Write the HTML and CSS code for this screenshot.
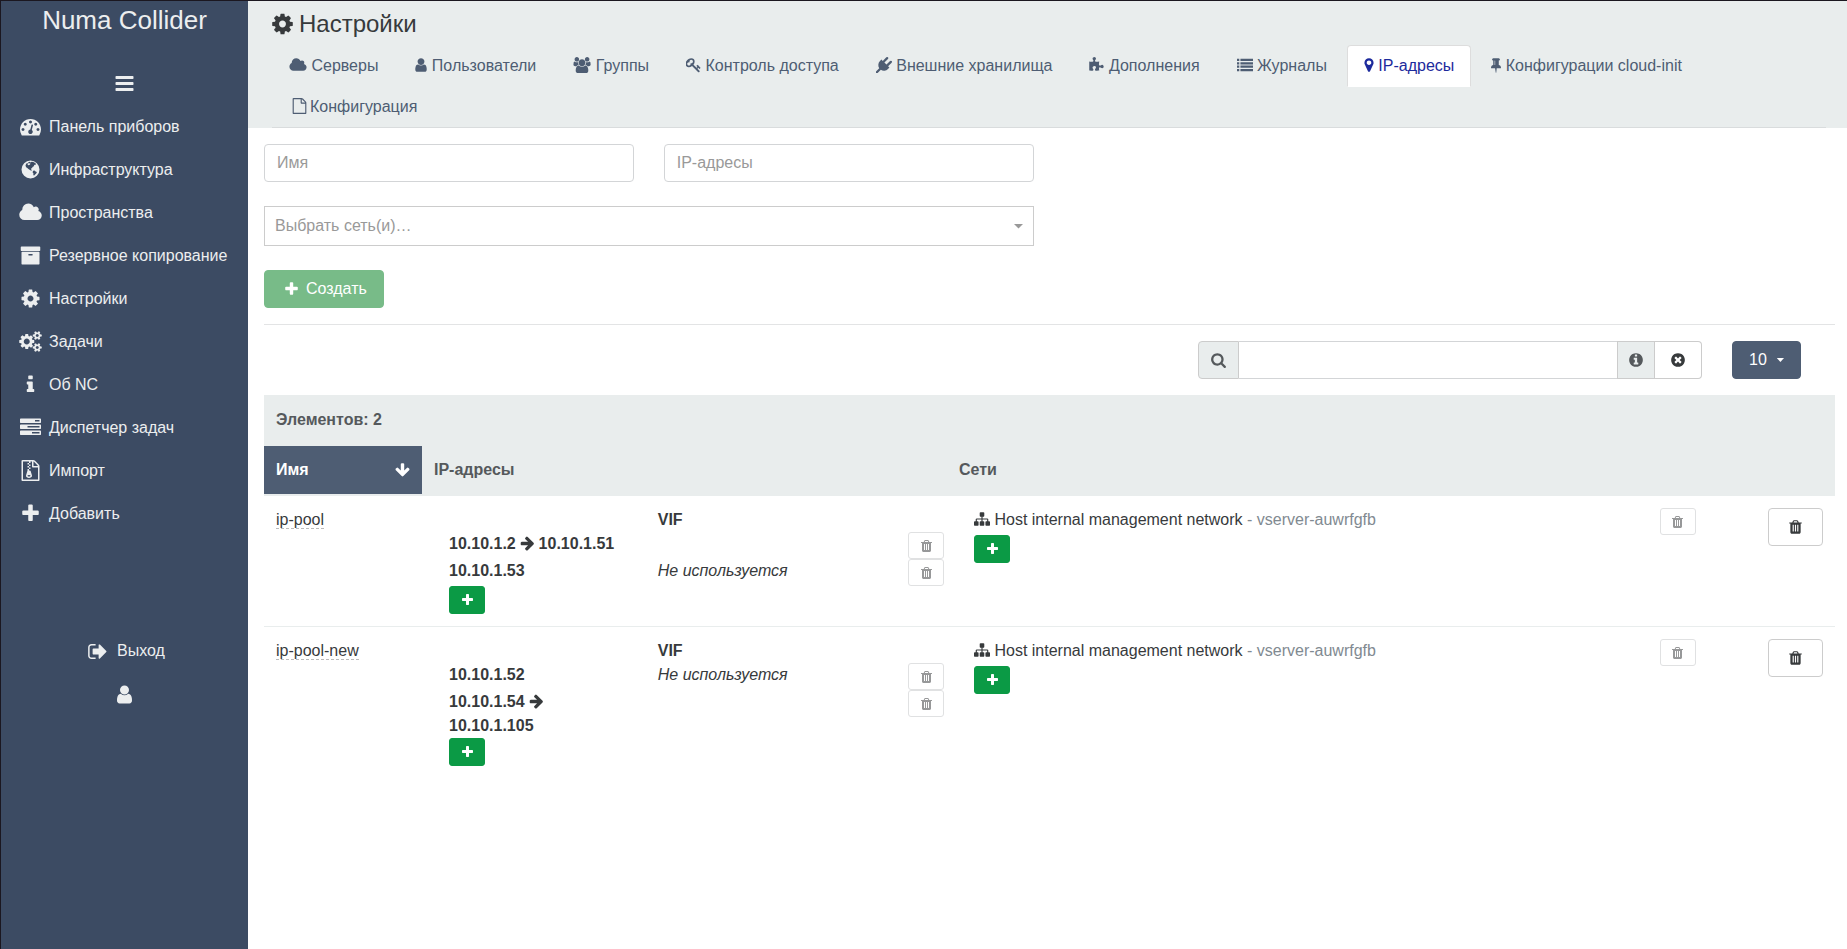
FILE: index.html
```html
<!DOCTYPE html>
<html lang="ru">
<head>
<meta charset="utf-8">
<title>Numa Collider</title>
<link rel="stylesheet" href="styles.css">
</head>
<body>
<svg class="sprite" aria-hidden="true">
<symbol id="bars" viewBox="128 0 1536 1792"><path d="M1664 1344v128q0 26-19 45t-45 19h-1408q-26 0-45-19t-19-45v-128q0-26 19-45t45-19h1408q26 0 45 19t19 45zm0-512v128q0 26-19 45t-45 19h-1408q-26 0-45-19t-19-45v-128q0-26 19-45t45-19h1408q26 0 45 19t19 45zm0-512v128q0 26-19 45t-45 19h-1408q-26 0-45-19t-19-45v-128q0-26 19-45t45-19h1408q26 0 45 19t19 45z"/></symbol>
<symbol id="gauge" viewBox="0 0 1792 1792"><path d="M384 1152q0-53-37.500-90.500t-90.500-37.500-90.500 37.500-37.500 90.500 37.500 90.500 90.500 37.500 90.500-37.500 37.500-90.500zm192-448q0-53-37.500-90.500t-90.500-37.500-90.500 37.500-37.500 90.500 37.500 90.500 90.500 37.500 90.500-37.500 37.500-90.500zm428 481l101-382q6-26-7.500-48.500t-38.500-29.500-48 6.500-30 39.500l-101 382q-60 5-107 43.500t-63 98.500q-20 77 20 146t117 89 146-20 89-117q16-60-6-117t-72-91zm660-33q0-53-37.500-90.500t-90.500-37.500-90.500 37.500-37.500 90.500 37.500 90.500 90.500 37.500 90.500-37.500 37.500-90.500zm-640-640q0-53-37.500-90.500t-90.500-37.500-90.500 37.500-37.500 90.500 37.500 90.500 90.500 37.500 90.500-37.500 37.500-90.500zm448 192q0-53-37.500-90.500t-90.500-37.500-90.500 37.500-37.500 90.500 37.500 90.500 90.500 37.500 90.500-37.500 37.500-90.500zm320 448q0 261-141 483-19 29-54 29h-1402q-35 0-54-29-141-221-141-483 0-182 71-348t191-286 286-191 348-71 348 71 286 191 191 286 71 348z"/></symbol>
<symbol id="globe" viewBox="128 0 1536 1792"><path fill-rule="evenodd" d="M896 128a768 768 0 1 0 0 1536a768 768 0 1 0 0-1536zM700 270L840 230L880 290L1000 230L1130 260L1290 340L1370 430L1290 520L1220 500L1180 620L1070 690L1020 780L930 800L960 900L1010 960L960 1010L850 930L720 860L600 740L520 700L470 560L520 430L600 340L690 400L640 480L720 540L830 500L900 400L820 360L720 380zM1120 1010L1240 990L1330 1060L1440 1100L1400 1220L1290 1330L1190 1420L1130 1330L1150 1230L1070 1120z"/></symbol>
<symbol id="cloud" viewBox="64 0 1920 1792"><path d="M1984 1152q0 159-112.500 271.500t-271.500 112.500h-1088q-185 0-316.500-131.500t-131.500-316.500q0-132 71-241.500t187-163.500q-2-28-2-43 0-212 150-362t362-150q158 0 286.500 88t187.500 230q70-62 166-62 106 0 181 75t75 181q0 75-41 138 129 30 213 134.500t84 239.500z"/></symbol>
<symbol id="archive" viewBox="64 0 1664 1792"><path d="M1088 832q0-26-19-45t-45-19h-256q-26 0-45 19t-19 45 19 45 45 19h256q26 0 45-19t19-45zm576-192v960q0 26-19 45t-45 19h-1408q-26 0-45-19t-19-45v-960q0-26 19-45t45-19h1408q26 0 45 19t19 45zm64-448v256q0 26-19 45t-45 19h-1536q-26 0-45-19t-19-45v-256q0-26 19-45t45-19h1536q26 0 45 19t19 45z"/></symbol>
<symbol id="cog" viewBox="128 0 1536 1792"><path d="M1152 896q0-106-75-181t-181-75-181 75-75 181 75 181 181 75 181-75 75-181zm512-109v222q0 12-8 23t-20 13l-185 28q-19 54-39 91 35 50 107 138 10 12 10 25t-9 23q-27 37-99 108t-94 71q-12 0-26-9l-138-108q-44 23-91 38-16 136-29 186-7 28-36 28h-222q-14 0-24.500-8.500t-11.500-21.500l-28-184q-49-16-90-37l-141 107q-10 9-25 9-14 0-25-11-126-114-165-168-7-10-7-23 0-12 8-23 15-21 51-66.500t54-70.500q-27-50-41-99l-183-27q-13-2-21-12.500t-8-23.500v-222q0-12 8-23t19-13l186-28q14-46 39-92-40-57-107-138-10-12-10-24 0-10 9-23 26-36 98.500-107.500t94.500-71.500q13 0 26 10l138 107q44-23 91-38 16-136 29-186 7-28 36-28h222q14 0 24.500 8.500t11.500 21.500l28 184q49 16 90 37l142-107q9-9 24-9 13 0 25 10 129 119 165 170 7 8 7 22 0 12-8 23-15 21-51 66.500t-54 70.500q26 50 41 98l183 28q13 2 21 12.500t8 23.500z"/></symbol>
<symbol id="cogs" viewBox="0 0 1920 1792"><path d="M896 896q0-106-75-181t-181-75-181 75-75 181 75 181 181 75 181-75 75-181zm768 512q0-52-38-90t-90-38-90 38-38 90q0 53 37.500 90.500t90.500 37.500 90.500-37.500 37.500-90.500zm0-1024q0-52-38-90t-90-38-90 38-38 90q0 53 37.500 90.500t90.500 37.500 90.500-37.500 37.500-90.500zm-384 421v185q0 10-7 19.500t-16 10.500l-155 24q-11 35-32 76 34 48 90 115 7 11 7 20 0 12-7 19-23 30-82.500 89.500t-78.500 59.500q-11 0-21-7l-115-90q-37 19-77 31-11 108-23 155-7 24-30 24h-186q-11 0-20-7.500t-10-17.500l-23-153q-34-10-75-31l-118 89q-7 7-20 7-11 0-21-8-144-133-144-160 0-9 7-19 10-14 41-53t47-61q-23-44-35-82l-152-24q-10-1-17-9.500t-7-19.500v-185q0-10 7-19.500t16-10.500l155-24q11-35 32-76-34-48-90-115-7-11-7-20 0-12 7-20 22-30 82-89t79-59q11 0 21 7l115 90q34-18 77-32 11-108 23-154 7-24 30-24h186q11 0 20 7.500t10 17.500l23 153q34 10 75 31l118-89q8-7 20-7 11 0 21 8 144 133 144 160 0 8-7 19-12 16-42 54t-45 60q23 48 34 82l152 23q10 2 17 10.500t7 19.500zm640 533v140q0 16-149 31-12 27-30 52 51 113 51 138 0 4-4 7-122 71-124 71-8 0-46-47t-52-68q-20 2-30 2t-30-2q-14 21-52 68t-46 47q-2 0-124-71-4-3-4-7 0-25 51-138-18-25-30-52-149-15-149-31v-140q0-16 149-31 13-29 30-52-51-113-51-138 0-4 4-7 4-2 35-20t59-34 30-16q8 0 46 46.500t52 67.500q20-2 30-2t30 2q51-71 92-112l6-2q4 0 124 70 4 3 4 7 0 25-51 138 17 23 30 52 149 15 149 31zm0-1024v140q0 16-149 31-12 27-30 52 51 113 51 138 0 4-4 7-122 71-124 71-8 0-46-47t-52-68q-20 2-30 2t-30-2q-14 21-52 68t-46 47q-2 0-124-71-4-3-4-7 0-25 51-138-18-25-30-52-149-15-149-31v-140q0-16 149-31 13-29 30-52-51-113-51-138 0-4 4-7 4-2 35-20t59-34 30-16q8 0 46 46.500t52 67.500q20-2 30-2t30 2q51-71 92-112l6-2q4 0 124 70 4 3 4 7 0 25-51 138 17 23 30 52 149 15 149 31z"/></symbol>
<symbol id="info" viewBox="576 0 640 1792"><path d="M1216 1344v128q0 26-19 45t-45 19h-512q-26 0-45-19t-19-45v-128q0-26 19-45t45-19h64v-384h-64q-26 0-45-19t-19-45v-128q0-26 19-45t45-19h384q26 0 45 19t19 45v576h64q26 0 45 19t19 45zm-128-1152v192q0 26-19 45t-45 19h-256q-26 0-45-19t-19-45v-192q0-26 19-45t45-19h256q26 0 45 19t19 45z"/></symbol>
<symbol id="tasks" viewBox="0 0 1792 1792"><path d="M1024 1408h640v-128h-640v128zm-384-512h1024v-128h-1024v128zm640-512h384v-128h-384v128zm512 832v256q0 26-19 45t-45 19h-1664q-26 0-45-19t-19-45v-256q0-26 19-45t45-19h1664q26 0 45 19t19 45zm0-512v256q0 26-19 45t-45 19h-1664q-26 0-45-19t-19-45v-256q0-26 19-45t45-19h1664q26 0 45 19t19 45zm0-512v256q0 26-19 45t-45 19h-1664q-26 0-45-19t-19-45v-256q0-26 19-45t45-19h1664q26 0 45 19t19 45z"/></symbol>
<symbol id="file-zip" viewBox="128 0 1536 1792"><path d="M768 384v-128h-128v128h128zm128 128v-128h-128v128h128zm-128 128v-128h-128v128h128zm128 128v-128h-128v128h128zm700-388q28 28 48 76t20 88v1152q0 40-28 68t-68 28h-1344q-40 0-68-28t-28-68v-1600q0-40 28-68t68-28h896q40 0 88 20t76 48zm-444-244v376h376q-10-29-22-41l-313-313q-12-12-41-22zm384 1528v-1024h-416q-40 0-68-28t-28-68v-416h-128v128h-128v-128h-512v1536h1280zm-627-721l107 349q8 27 8 52 0 83-72.500 137.500t-183.500 54.500-183.500-54.500-72.500-137.500q0-25 8-52 21-63 120-396v-128h128v128h79q22 0 39 13t23 34zm-141 465q53 0 90.500-19t37.500-45-37.500-45-90.500-19-90.500 19-37.500 45 37.500 45 90.500 19z"/></symbol>
<symbol id="file" viewBox="128 0 1536 1792"><path d="M1596 380q28 28 48 76t20 88v1152q0 40-28 68t-68 28h-1344q-40 0-68-28t-28-68v-1600q0-40 28-68t68-28h896q40 0 88 20t76 48zm-444-244v376h376q-10-29-22-41l-313-313q-12-12-41-22zm384 1528v-1024h-416q-40 0-68-28t-28-68v-416h-768v1536h1280z"/></symbol>
<symbol id="plus" viewBox="192 0 1408 1792"><path d="M1600 736v192q0 40-28 68t-68 28h-416v416q0 40-28 68t-68 28h-192q-40 0-68-28t-28-68v-416h-416q-40 0-68-28t-28-68v-192q0-40 28-68t68-28h416v-416q0-40 28-68t68-28h192q40 0 68 28t28 68v416h416q40 0 68 28t28 68z"/></symbol>
<symbol id="sign-out" viewBox="64 0 1600 1792"><path d="M704 1440q0 4 1 20t.5 26.500-3 23.500-10 19.500-20.500 6.500h-320q-119 0-203.500-84.500t-84.500-203.500v-704q0-119 84.500-203.500t203.500-84.500h320q13 0 22.500 9.500t9.500 22.500q0 4 1 20t.5 26.500-3 23.500-10 19.500-20.500 6.500h-320q-66 0-113 47t-47 113v704q0 66 47 113t113 47h312l11.500 1 11.500 3 8 5.500 7 9 2 13.500zm928-544q0 26-19 45l-544 544q-19 19-45 19t-45-19-19-45v-288h-448q-26 0-45-19t-19-45v-384q0-26 19-45t45-19h448v-288q0-26 19-45t45-19 45 19l544 544q19 19 19 45z"/></symbol>
<symbol id="user" viewBox="256 0 1280 1792"><path d="M1536 1399q0 109-62.500 187t-150.500 78h-854q-88 0-150.500-78t-62.500-187q0-85 8.500-160.500t31.500-152 58.500-131 94-89 134.500-34.500q131 128 313 128t313-128q76 0 134.500 34.500t94 89 58.500 131 31.500 152 8.500 160.500zm-256-887q0 159-112.500 271.500t-271.500 112.500-271.500-112.500-112.500-271.500 112.500-271.500 271.500-112.500 271.500 112.500 112.500 271.500z"/></symbol>
<symbol id="users" viewBox="64 0 1920 1792"><path d="M657 896q-162 5-265 128h-134q-82 0-138-40.500t-56-118.500q0-353 124-353 6 0 43.500 21t97.500 42.500 119 21.500q67 0 133-23-5 37-5 66 0 159 93 256zm1071 637q0 120-73 189.500t-194 69.500h-874q-121 0-194-69.500t-73-189.500q0-53 3.500-103.500t14-109 26.500-108.500 43-97.500 62-81 85.500-53.500 111.500-20q10 0 43 21.500t73 48 107 48 135 21.500 135-21.500 107-48 73-48 43-21.500q61 0 111.500 20t85.500 53.500 62 81 43 97.500 26.500 108.500 14 109 3.500 103.500zm-1024-1277q0 106-75 181t-181 75-181-75-75-181 75-181 181-75 181 75 75 181zm704 384q0 159-112.500 271.500t-271.500 112.500-271.500-112.500-112.500-271.500 112.500-271.500 271.500-112.500 271.500 112.500 112.500 271.500zm576 225q0 78-56 118.500t-138 40.500h-134q-103-123-265-128 93-97 93-256 0-29-5-66 66 23 133 23 59 0 119-21.500t97.500-42.500 43.500-21q124 0 124 353zm-128-609q0 106-75 181t-181 75-181-75-75-181 75-181 181-75 181 75 75 181z"/></symbol>
<symbol id="key" viewBox="64 0 1664 1792"><path d="M832 512q0-80-56-136t-136-56-136 56-56 136q0 42 19 83-41-19-83-19-80 0-136 56t-56 136 56 136 136 56 136-56 56-136q0-42-19-83 41 19 83 19 80 0 136-56t56-136zm851 704q0 17-49 66t-66 49q-9 0-28.500-16t-36.500-33-38.500-40-24.500-26l-96 96 220 220q28 28 28 68 0 42-39 81t-81 39q-40 0-68-28l-671-671q-176 131-365 131-163 0-265.500-102.500t-102.500-265.500q0-160 95-313t248-248 313-95q163 0 265.500 102.500t102.500 265.500q0 189-131 365l355 355 96-96q-3-3-26-24.500t-40-38.500-33-36.500-16-28.500q0-17 49-66t66-49q13 0 23 10 6 6 46 44.500t82 79.500 86.500 86 73 78 28.500 41z"/></symbol>
<symbol id="plug" viewBox="0 0 1792 1792"><path d="M1755 453q37 38 37 90.500t-37 90.500l-401 400 150 150-160 160q-163 163-389.500 186.500t-411.500-100.500l-362 362h-181v-181l362-362q-124-185-100.500-411.500t186.500-389.500l160-160 150 150 400-401q38-37 91-37t90 37 37 90.500-37 90.500l-400 401 234 234 401-400q38-37 91-37t90 37z"/></symbol>
<symbol id="puzzle" viewBox="64 0 1728 1792"><path d="M1755 1083q0 81-44.500 135t-123.500 54q-41 0-77.500-17.500t-59-38-56.500-38-71-17.500q-110 0-110 124 0 39 16 115t15 115v5q-22 0-33 1-34 3-97.500 11.500t-115.500 13.500-98 5q-61 0-103-26.500t-42-83.500q0-37 17.500-71t38-56.500 38-59 17.500-77.500q0-79-54-123.500t-135-44.500q-84 0-143 45.500t-59 127.500q0 43 15 83t33.500 64.500 33.500 53 15 50.500q0 45-46 89-37 35-117 35-95 0-245-24-9-2-27.500-4t-27.500-4l-13-2q-1 0-3-1-2 0-2-1v-1024q2 1 17.500 3.500t34 5 21.500 3.500q150 24 245 24 80 0 117-35 46-44 46-89 0-22-15-50.500t-33.500-53-33.500-64.500-15-83q0-82 59-127.500t144-45.500q80 0 134 44.500t54 123.500q0 41-17.500 77.500t-38 59-38 56.500-17.500 71q0 57 42 83.500t103 26.500q64 0 180-15t163-17v2q-1 2-3.500 17.500t-5 34-3.500 21.500q-24 150-24 245 0 80 35 117 44 46 89 46 22 0 50.500-15t53-33.500 64.500-33.500 83-15q82 0 127.500 59t45.500 143z"/></symbol>
<symbol id="list" viewBox="0 0 1792 1792"><path d="M0 192h256v256H0zM384 192h1408v256H384zM0 576h256v256H0zM384 576h1408v256H384zM0 960h256v256H0zM384 960h1408v256H384zM0 1344h256v256H0zM384 1344h1408v256H384z"/></symbol>
<symbol id="marker" viewBox="384 0 1024 1792"><path d="M1152 640q0-106-75-181t-181-75-181 75-75 181 75 181 181 75 181-75 75-181zm256 0q0 109-33 179l-364 774q-16 33-47.500 52t-67.500 19-67.500-19-46.500-52l-365-774q-33-70-33-179 0-212 150-362t362-150 362 150 150 362z"/></symbol>
<symbol id="pin" viewBox="320 0 1152 1792"><path d="M800 864v-448q0-14-9-23t-23-9-23 9-9 23v448q0 14 9 23t23 9 23-9 9-23zm672 352q0 26-19 45t-45 19h-429l-51 483q-2 12-10.500 20.500t-20.500 8.500h-1q-27 0-32-27l-76-485h-404q-26 0-45-19t-19-45q0-123 78.500-221.500t177.500-98.500v-512q-52 0-90-38t-38-90 38-90 90-38h640q52 0 90 38t38 90-38 90-90 38v512q99 0 177.500 98.500t78.500 221.500z"/></symbol>
<symbol id="search" viewBox="64 0 1664 1792"><path d="M1216 832q0-185-131.500-316.500t-316.500-131.500-316.500 131.500-131.500 316.500 131.500 316.500 316.500 131.500 316.500-131.500 131.500-316.500zm512 832q0 52-38 90t-90 38q-54 0-90-38l-343-342q-179 124-399 124-143 0-273.500-55.500t-225-150-150-225-55.500-273.500 55.500-273.500 150-225 225-150 273.500-55.500 273.500 55.500 225 150 150 225 55.500 273.500q0 220-124 399l343 343q37 37 37 90z"/></symbol>
<symbol id="info-circle" viewBox="128 0 1536 1792"><path d="M1152 1376v-160q0-14-9-23t-23-9h-96v-512q0-14-9-23t-23-9h-320q-14 0-23 9t-9 23v160q0 14 9 23t23 9h96v320h-96q-14 0-23 9t-9 23v160q0 14 9 23t23 9h448q14 0 23-9t9-23zm-128-896v-160q0-14-9-23t-23-9h-192q-14 0-23 9t-9 23v160q0 14 9 23t23 9h192q14 0 23-9t9-23zm640 416q0 209-103 385.500t-279.500 279.500-385.500 103-385.500-103-279.500-279.500-103-385.500 103-385.500 279.500-279.500 385.500-103 385.500 103 279.500 279.500 103 385.500z"/></symbol>
<symbol id="times-circle" viewBox="128 0 1536 1792"><path d="M1277 1122q0-26-19-45l-181-181 181-181q19-19 19-45 0-27-19-46l-90-90q-19-19-46-19-26 0-45 19l-181 181-181-181q-19-19-45-19-27 0-46 19l-90 90q-19 19-19 46 0 26 19 45l181 181-181 181q-19 19-19 45 0 27 19 46l90 90q19 19 46 19 26 0 45-19l181-181 181 181q19 19 45 19 27 0 46-19l90-90q19-19 19-46zm387-226q0 209-103 385.500t-279.500 279.500-385.500 103-385.500-103-279.500-279.500-103-385.500 103-385.500 279.500-279.500 385.500-103 385.500 103 279.500 279.500 103 385.500z"/></symbol>
<symbol id="arrow-down" viewBox="64 0 1664 1792"><path d="M1675 832q0 53-37 90l-651 652q-39 37-91 37-53 0-90-37l-651-652q-38-36-38-90 0-53 38-91l74-75q39-37 91-37 53 0 90 37l294 294v-704q0-52 38-90t90-38h128q52 0 90 38t38 90v704l294-294q37-37 90-37 52 0 91 37l75 75q37 39 37 91z"/></symbol>
<symbol id="arrow-right" viewBox="64 0 1536 1792"><path d="M1600 960q0 54-37 91l-651 651q-39 37-91 37-51 0-90-37l-75-75q-38-38-38-91t38-91l293-293h-704q-52 0-84.500-37.500t-32.500-90.500v-128q0-53 32.500-90.500t84.500-37.500h704l-293-294q-38-36-38-90t38-90l75-75q38-38 90-38 53 0 91 38l651 651q37 35 37 90z"/></symbol>
<symbol id="trash" viewBox="192 0 1408 1792"><path d="M704 1376v-704q0-14-9-23t-23-9h-64q-14 0-23 9t-9 23v704q0 14 9 23t23 9h64q14 0 23-9t9-23zm256 0v-704q0-14-9-23t-23-9h-64q-14 0-23 9t-9 23v704q0 14 9 23t23 9h64q14 0 23-9t9-23zm256 0v-704q0-14-9-23t-23-9h-64q-14 0-23 9t-9 23v704q0 14 9 23t23 9h64q14 0 23-9t9-23zm-544-992h448l-48-117q-7-9-17-11h-317q-10 2-17 11zm928 32v64q0 14-9 23t-23 9h-96v948q0 83-47 143.500t-113 60.500h-832q-66 0-113-58.500t-47-141.500v-952h-96q-14 0-23-9t-9-23v-64q0-14 9-23t23-9h309l70-167q15-37 54-63t79-26h320q40 0 79 26t54 63l70 167h309q14 0 23 9t9 23z"/></symbol>
<symbol id="sitemap" viewBox="0 0 1792 1792"><path d="M1792 1248v320q0 40-28 68t-68 28h-320q-40 0-68-28t-28-68v-320q0-40 28-68t68-28h96v-192h-512v192h96q40 0 68 28t28 68v320q0 40-28 68t-68 28h-320q-40 0-68-28t-28-68v-320q0-40 28-68t68-28h96v-192h-512v192h96q40 0 68 28t28 68v320q0 40-28 68t-68 28h-320q-40 0-68-28t-28-68v-320q0-40 28-68t68-28h96v-192q0-52 38-90t90-38h512v-192h-96q-40 0-68-28t-28-68v-320q0-40 28-68t68-28h320q40 0 68 28t28 68v320q0 40-28 68t-68 28h-96v192h512q52 0 90 38t38 90v192h96q40 0 68 28t28 68z"/></symbol>
</svg>

<div class="app">
  <nav class="sidebar" aria-label="Главное меню">
    <a class="brand" href="#">Numa Collider</a>
    <button class="side-toggle" type="button" aria-label="Свернуть меню"><svg class="icon w19"><use href="#bars"/></svg></button>
    <ul class="menu">
      <li><a href="#"><svg class="icon w27"><use href="#gauge"/></svg>Панель приборов</a></li>
      <li><a href="#"><svg class="icon w27"><use href="#globe"/></svg>Инфраструктура</a></li>
      <li><a href="#"><svg class="icon w27"><use href="#cloud"/></svg>Пространства</a></li>
      <li><a href="#"><svg class="icon w27"><use href="#archive"/></svg>Резервное копирование</a></li>
      <li><a href="#"><svg class="icon w27"><use href="#cog"/></svg>Настройки</a></li>
      <li><a href="#"><svg class="icon w27"><use href="#cogs"/></svg>Задачи</a></li>
      <li><a href="#"><svg class="icon w27"><use href="#info"/></svg>Об NC</a></li>
      <li><a href="#"><svg class="icon w27"><use href="#tasks"/></svg>Диспетчер задач</a></li>
      <li><a href="#"><svg class="icon w27"><use href="#file-zip"/></svg>Импорт</a></li>
      <li><a href="#"><svg class="icon w27"><use href="#plus"/></svg>Добавить</a></li>
    </ul>
    <div class="session">
      <button type="button"><svg class="icon w27"><use href="#sign-out"/></svg>Выход</button>
      <a href="#" aria-label="Профиль"><svg class="icon w19"><use href="#user"/></svg></a>
    </div>
  </nav>

  <div class="page">
    <header class="page-head">
      <h1><svg class="icon w21"><use href="#cog"/></svg>Настройки</h1>
      <ul class="tabs">
        <li><a href="#"><svg class="icon w18"><use href="#cloud"/></svg> Серверы</a></li>
        <li><a href="#"><svg class="icon w12"><use href="#user"/></svg> Пользователи</a></li>
        <li><a href="#"><svg class="icon w18"><use href="#users"/></svg> Группы</a></li>
        <li><a href="#"><svg class="icon w15"><use href="#key"/></svg> Контроль доступа</a></li>
        <li><a href="#"><svg class="icon w16"><use href="#plug"/></svg> Внешние хранилища</a></li>
        <li><a href="#"><svg class="icon w15"><use href="#puzzle"/></svg> Дополнения</a></li>
        <li><a href="#"><svg class="icon w16"><use href="#list"/></svg> Журналы</a></li>
        <li><a class="active" href="#" aria-current="page"><svg class="icon w10"><use href="#marker"/></svg> IP-адресы</a></li>
        <li><a href="#"><svg class="icon w10"><use href="#pin"/></svg> Конфигурации cloud-init</a></li>
        <li><a href="#"><svg class="icon w21"><use href="#file"/></svg>Конфигурация</a></li>
      </ul>
    </header>

    <main class="content">
      <form class="create-form">
        <input class="field" type="text" placeholder="Имя" aria-label="Имя">
        <input class="field" type="text" placeholder="IP-адресы" aria-label="IP-адресы">
        <div class="picker">
          <select aria-label="Выбрать сеть(и)"><option>Выбрать сеть(и)…</option></select>
          <span class="caret"></span>
        </div>
        <button class="btn btn-create" type="submit" disabled><svg class="icon w13"><use href="#plus"/></svg>Создать</button>
      </form>

      <div class="toolbar">
        <div class="search">
          <span class="addon"><svg class="icon w15"><use href="#search"/></svg></span>
          <input type="text" aria-label="Поиск">
          <button class="addon help" type="button" aria-label="Справка"><svg class="icon w14"><use href="#info-circle"/></svg></button>
          <button class="addon clear" type="button" aria-label="Очистить"><svg class="icon w14"><use href="#times-circle"/></svg></button>
        </div>
        <button class="btn page-size" type="button">10<span class="caret"></span></button>
      </div>

      <table class="pools">
        <colgroup><col class="col-name"><col class="col-ips"><col class="col-nets"><col class="col-actions"></colgroup>
        <thead>
          <tr><th colspan="4">Элементов: 2</th></tr>
          <tr>
            <th class="sorted" aria-sort="descending"><span class="sort">Имя<svg class="icon w15"><use href="#arrow-down"/></svg></span></th>
            <th>IP-адресы</th>
            <th>Сети</th>
            <th></th>
          </tr>
        </thead>
        <tbody>
          <tr>
            <td><a class="editable" href="#">ip-pool</a></td>
            <td>
              <div class="ips">
                <span></span><strong>VIF</strong><span></span>
                <strong>10.10.1.2 <svg class="icon w14"><use href="#arrow-right"/></svg> 10.10.1.51</strong><span></span>
                <span><button class="btn-sm del" type="button" disabled aria-label="Удалить"><svg class="icon"><use href="#trash"/></svg></button></span>
                <strong>10.10.1.53</strong><em>Не используется</em>
                <span><button class="btn-sm del" type="button" disabled aria-label="Удалить"><svg class="icon"><use href="#trash"/></svg></button></span>
                <span><button class="btn-sm add" type="button" aria-label="Добавить адрес"><svg class="icon"><use href="#plus"/></svg></button></span>
              </div>
            </td>
            <td>
              <div class="nets">
                <span><svg class="icon w16"><use href="#sitemap"/></svg> Host internal management network <span class="muted">- vserver-auwrfgfb</span></span>
                <span><button class="btn-sm del" type="button" disabled aria-label="Удалить"><svg class="icon"><use href="#trash"/></svg></button></span>
                <span><button class="btn-sm add" type="button" aria-label="Добавить сеть"><svg class="icon"><use href="#plus"/></svg></button></span>
              </div>
            </td>
            <td class="actions"><button class="btn btn-delete" type="button" aria-label="Удалить пул"><svg class="icon w13"><use href="#trash"/></svg></button></td>
          </tr>
          <tr>
            <td><a class="editable" href="#">ip-pool-new</a></td>
            <td>
              <div class="ips">
                <span></span><strong>VIF</strong><span></span>
                <strong>10.10.1.52</strong><em>Не используется</em>
                <span><button class="btn-sm del" type="button" disabled aria-label="Удалить"><svg class="icon"><use href="#trash"/></svg></button></span>
                <strong>10.10.1.54 <svg class="icon w14"><use href="#arrow-right"/></svg> 10.10.1.105</strong><span></span>
                <span><button class="btn-sm del" type="button" disabled aria-label="Удалить"><svg class="icon"><use href="#trash"/></svg></button></span>
                <span><button class="btn-sm add" type="button" aria-label="Добавить адрес"><svg class="icon"><use href="#plus"/></svg></button></span>
              </div>
            </td>
            <td>
              <div class="nets">
                <span><svg class="icon w16"><use href="#sitemap"/></svg> Host internal management network <span class="muted">- vserver-auwrfgfb</span></span>
                <span><button class="btn-sm del" type="button" disabled aria-label="Удалить"><svg class="icon"><use href="#trash"/></svg></button></span>
                <span><button class="btn-sm add" type="button" aria-label="Добавить сеть"><svg class="icon"><use href="#plus"/></svg></button></span>
              </div>
            </td>
            <td class="actions"><button class="btn btn-delete" type="button" aria-label="Удалить пул"><svg class="icon w13"><use href="#trash"/></svg></button></td>
          </tr>
        </tbody>
      </table>
    </main>
  </div>
</div>
</body>
</html>
```

FILE: styles.css
```css
* { box-sizing: border-box; }

body {
  margin: 0;
  color: #373a3c;
  background: #fff;
  font: 16px/24px "Liberation Sans", Arial, sans-serif;
}

button, input, select { font: inherit; color: inherit; }
button { cursor: pointer; }
a { color: inherit; text-decoration: none; }
ul { margin: 0; padding: 0; list-style: none; }

.sprite { display: none; }
.icon { width: 14px; height: 16px; fill: currentColor; vertical-align: -2px; flex: none; }
.w10 { width: 10px; }
.w12 { width: 12px; }
.w13 { width: 13px; }
.w14 { width: 14px; }
.w15 { width: 15px; }
.w16 { width: 16px; }
.w18 { width: 18px; }
.w19 { width: 19px; }
.w21 { width: 21px; }
.w27 { width: 27px; }

.app {
  display: flex;
  min-height: 100vh;
  border-top: 1px solid #1b1720;
  border-left: 1px solid #1b1720;
}

/* Sidebar */
.sidebar {
  flex: none;
  display: flex;
  flex-direction: column;
  width: 247px;
  color: #eceeef;
  background: #3c4b63;
}
.sidebar .icon { height: 21px; }
.brand { padding: 3px 0; font-size: 26px; line-height: 32px; text-align: center; }
.side-toggle {
  align-self: center;
  display: flex;
  margin-top: 34px;
  padding: 0;
  border: 0;
  background: none;
}
.menu { margin-top: 11px; }
.menu a {
  display: flex;
  align-items: center;
  gap: 5px;
  height: 43px;
  padding-left: 16px;
}
.session {
  display: flex;
  flex-direction: column;
  align-items: center;
  gap: 21px;
  margin-top: 104px;
}
.session button {
  display: flex;
  align-items: center;
  gap: 6px;
  padding: 0;
  border: 0;
  background: none;
}
.session a { display: flex; }

/* Page header */
.page { flex: 1; min-width: 0; }
.page-head { padding: 9px 21px 0 24px; background: #e9eded; }
.page-head h1 {
  display: flex;
  align-items: center;
  gap: 6px;
  margin: 0 0 7px;
  font-size: 24px;
  font-weight: 400;
  line-height: 28px;
}
.page-head h1 .icon { height: 24px; }
.tabs {
  display: flex;
  flex-wrap: wrap;
  column-gap: 3px;
  border-bottom: 1px solid #d9dcdd;
  color: #4e5d73;
}
.tabs li { margin-bottom: -1px; }
.tabs a {
  display: block;
  padding: 8px 16px;
  border: 1px solid transparent;
  border-radius: 4px 4px 0 0;
  white-space: nowrap;
}
.tabs li:last-child { margin-bottom: 0; }
.tabs li:last-child a { border-bottom: 0; }
.tabs .active { color: #1c2a9c; background: #fff; border-color: #ddd; border-bottom-color: #fff; }

/* Form */
.content { padding: 16px 12px 16px 16px; }
.create-form {
  display: grid;
  grid-template-columns: 1fr 1fr;
  column-gap: 30px;
  row-gap: 24px;
  width: calc(50% - 16px);
}
.field {
  width: 100%;
  height: 38px;
  padding: 6px 12px;
  border: 1px solid #d3d5d7;
  border-radius: 4px;
  background: #fff;
}
.field::placeholder { color: #999; opacity: 1; }
.picker { grid-column: 1 / -1; display: grid; align-items: center; }
.picker select, .picker .caret { grid-area: 1 / 1; }
.picker select {
  height: 40px;
  padding: 0 10px;
  border: 1px solid #ccc;
  border-radius: 0;
  color: #999;
  background: #fff;
  appearance: none;
}
.caret {
  width: 8px;
  height: 4px;
  background: currentColor;
  clip-path: polygon(0 0, 100% 0, 50% 100%);
}
.picker .caret { justify-self: end; width: 10px; height: 5px; margin-right: 10px; color: #999; pointer-events: none; }

.btn {
  display: inline-flex;
  align-items: center;
  justify-content: center;
  height: 38px;
  padding: 0 16px;
  border: 1px solid #ccc;
  border-radius: 4px;
  background: #fff;
}
.btn-create {
  justify-self: start;
  gap: 8px;
  padding: 0 16px 0 20px;
  border-color: #78bb88;
  color: #fff;
  background: #78bb88;
}

/* Toolbar */
.toolbar {
  display: flex;
  justify-content: flex-end;
  gap: 30px;
  margin-top: 16px;
  padding: 16px 34px 16px 0;
  border-top: 1px solid #e3e4e5;
}
.search { display: flex; width: 504px; height: 38px; }
.search input {
  flex: 1;
  min-width: 0;
  padding: 0 12px;
  border: 1px solid #d3d5d7;
  border-width: 1px 0;
}
.addon {
  display: flex;
  align-items: center;
  padding: 0 12px;
  border: 1px solid #ccc;
  color: #55595c;
  background: #e9eded;
}
.addon:first-child { border-radius: 4px 0 0 4px; }
.addon.help { padding: 0 11px; }
.addon.clear {
  padding: 0 16px;
  border-left: 0;
  border-radius: 0 4px 4px 0;
  color: #373a3c;
  background: #fff;
}
.page-size { gap: 10px; width: 69px; border-color: #4e5d73; color: #fff; background: #4e5d73; }

/* Table */
.pools { width: 100%; table-layout: fixed; border-collapse: separate; border-spacing: 0; }
.col-name { width: 158px; }
.col-ips { width: 525px; }
.col-actions { width: 116px; }
.pools th {
  padding: 12px;
  border-bottom: 2px solid #e9eded;
  color: #55595c;
  background: #e9eded;
  text-align: left;
}
.pools tr:first-child th { padding-top: 13px; }
.pools .sorted { color: #fff; background: #4e5d73; }
.sort { display: flex; align-items: center; justify-content: space-between; }
.pools td { padding: 12px; vertical-align: top; }
.pools tbody tr + tr td { border-top: 1px solid #e9eded; }
.editable { border-bottom: 1px dashed #bbb; }
.actions { text-align: right; }
.btn-delete { width: 55px; }

.ips, .nets { display: grid; }
.ips { grid-template-columns: minmax(0, 5fr) minmax(0, 6fr) minmax(0, 1fr); }
.nets { grid-template-columns: minmax(0, 11fr) minmax(0, 1fr); }
.ips > *, .nets > * { padding: 0 15px; min-height: 24px; }
.muted { color: #818a91; }

.btn-sm {
  display: flex;
  align-items: center;
  justify-content: center;
  width: 36px;
  height: 27px;
  padding: 0;
  border: 1px solid #ccc;
  border-radius: 3px;
  background: #fff;
}
.btn-sm .icon { width: 11px; height: 14px; }
.btn-sm.del { border-color: #e0e1e2; color: #979899; }
.btn-sm.add { height: 28px; border-color: #0b9a45; color: #fff; background: #0b9a45; }
```
